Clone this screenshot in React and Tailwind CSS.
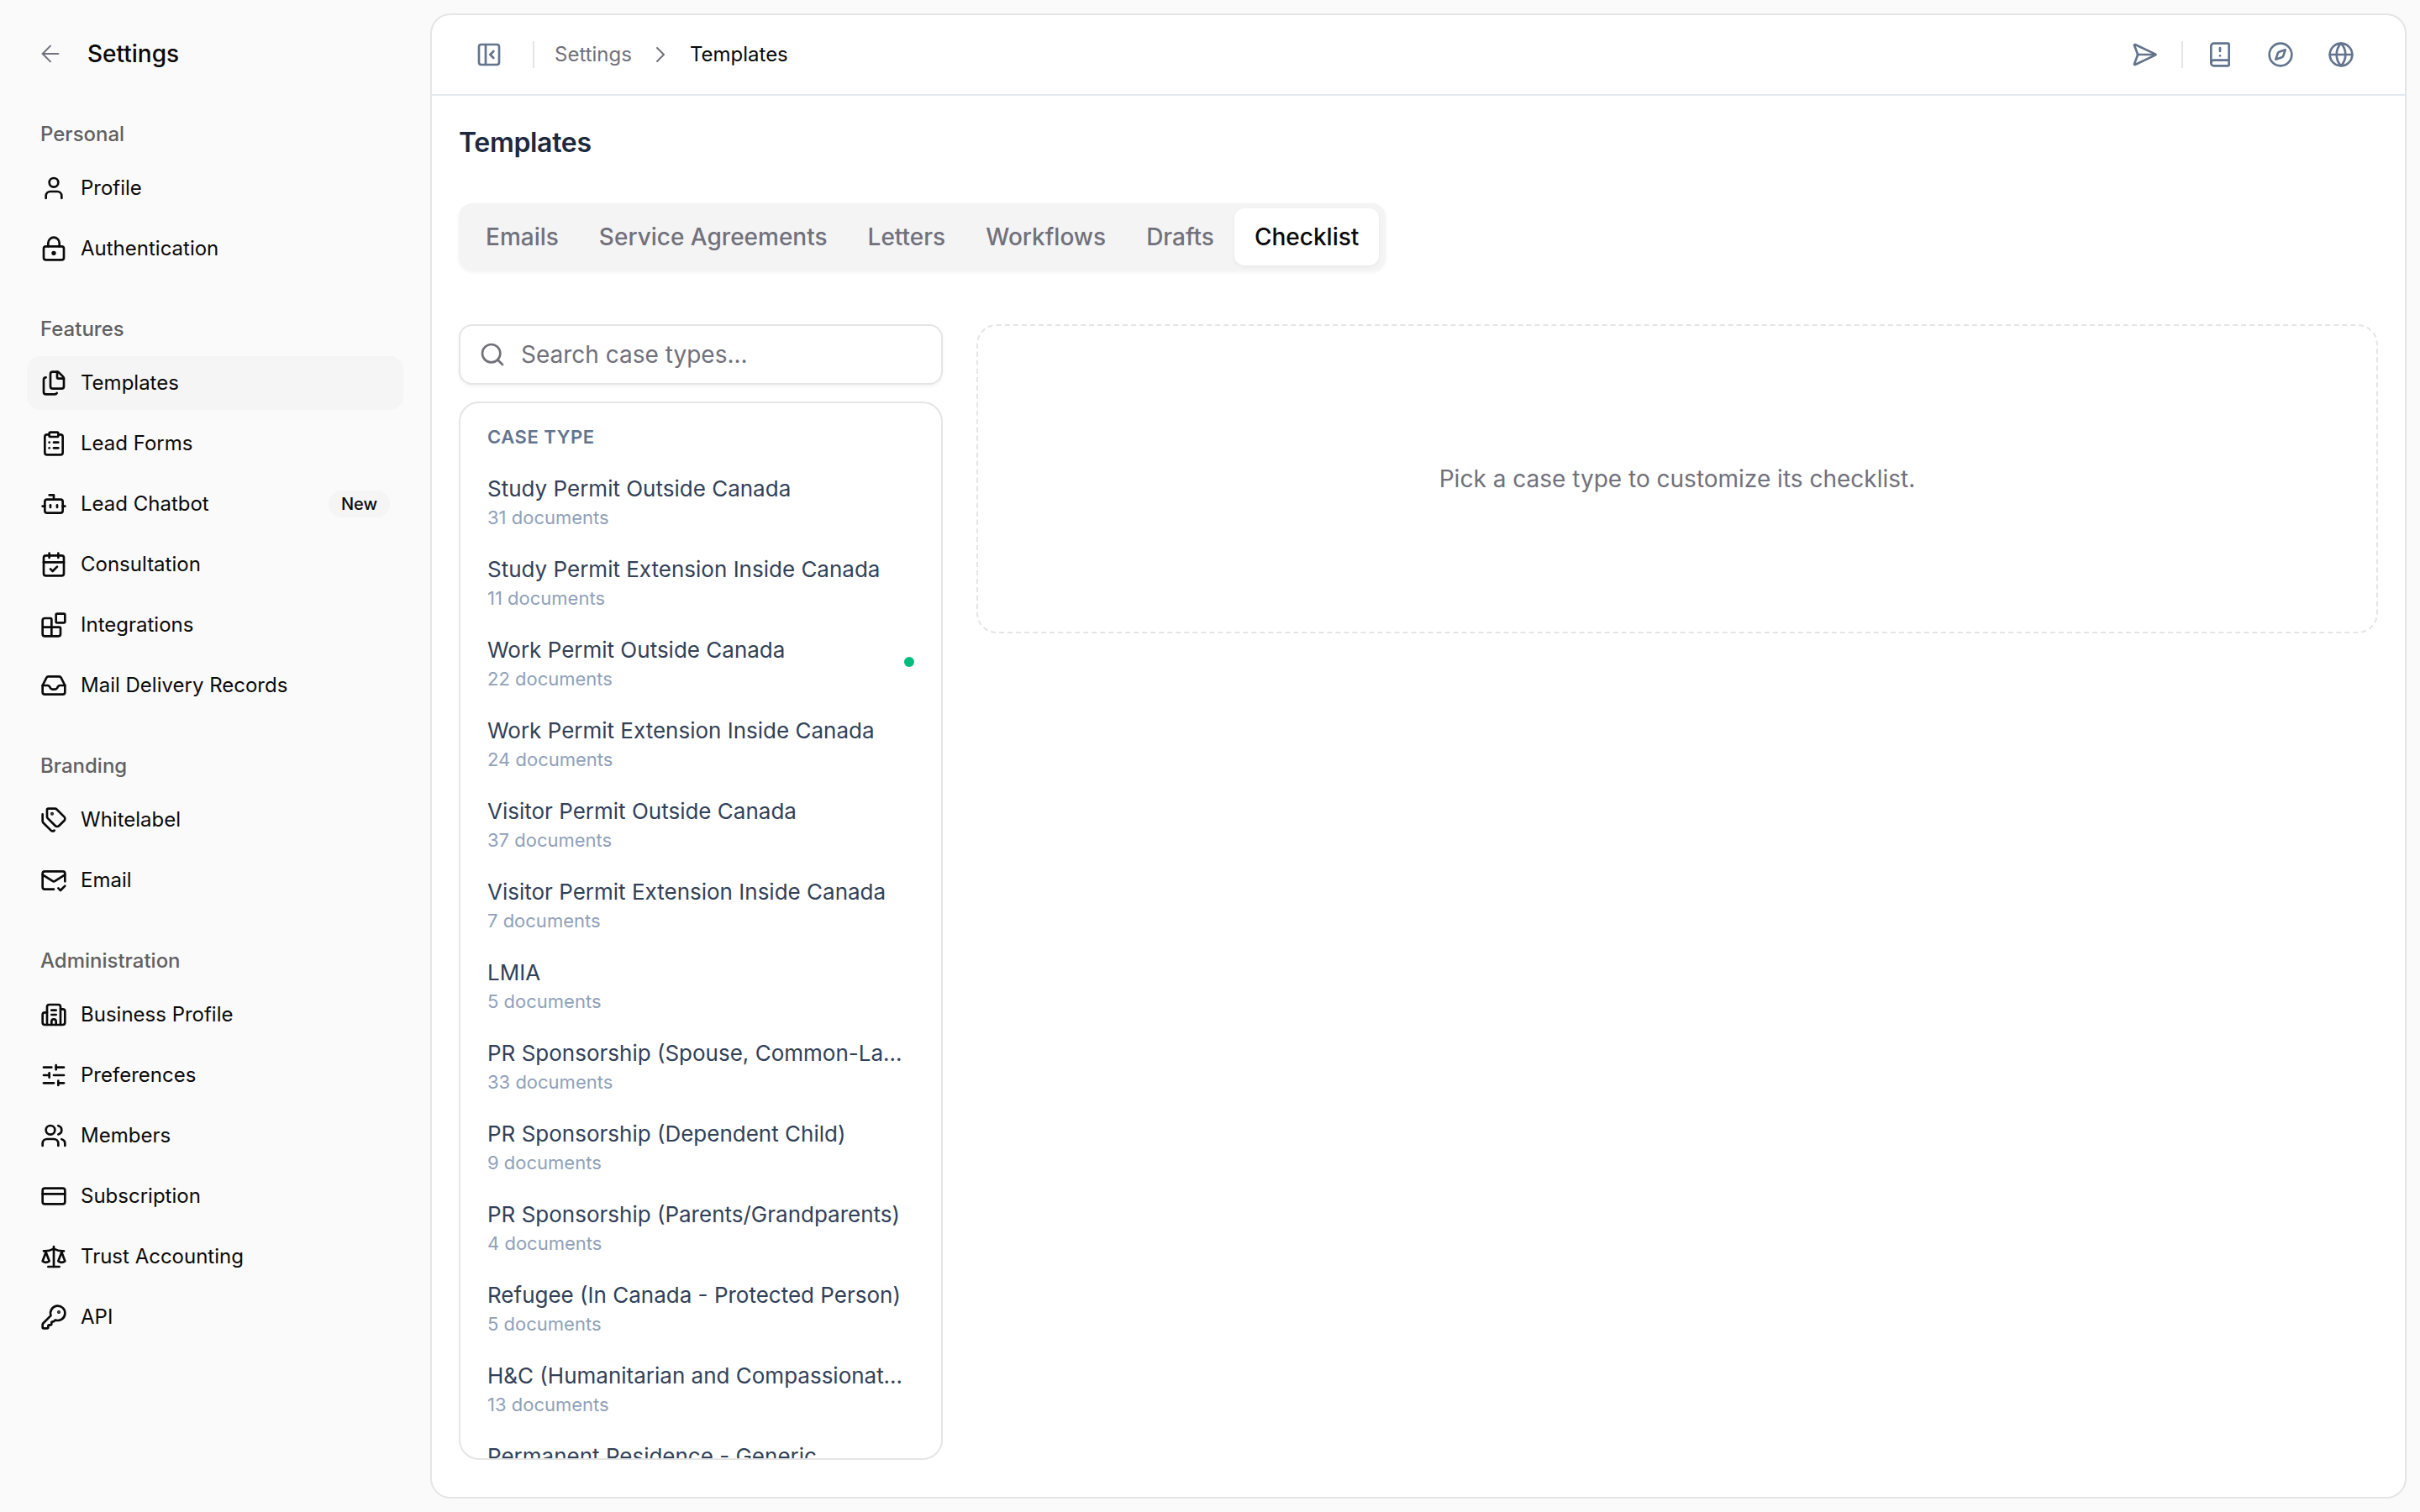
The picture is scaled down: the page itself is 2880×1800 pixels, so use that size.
import React from "react";
import {
  ArrowLeft, User, LockKeyhole, Files, ClipboardList, Bot, CalendarCheck, Blocks, Tags, MailCheck,
  Building2, SlidersHorizontal, Users, CreditCard, Scale, KeyRound, PanelLeftClose, ChevronRight,
  SendHorizontal, BookAlert, Compass, Globe, Search,
} from "lucide-react";

function TrayIcon({ className }) {
  return (
    <svg className={className} viewBox="0 0 24 24" fill="none" stroke="currentColor" strokeWidth="2" strokeLinecap="round" strokeLinejoin="round">
      <path d="M5.45 5.11 2 12v6a2 2 0 0 0 2 2h16a2 2 0 0 0 2-2v-6l-3.45-6.89A2 2 0 0 0 16.76 4H7.24a2 2 0 0 0-1.79 1.11z" />
      <path d="M2 12h4.5c.8 0 1.4.4 1.8 1.1l.7 1.3c.4.7 1 1.1 1.8 1.1h2.4c.8 0 1.4-.4 1.8-1.1l.7-1.3c.4-.7 1-1.1 1.8-1.1H22" />
    </svg>
  );
}

const sections = [
  { label: "Personal", items: [{ t: "Profile", I: User }, { t: "Authentication", I: LockKeyhole }] },
  {
    label: "Features",
    items: [
      { t: "Templates", I: Files, active: true },
      { t: "Lead Forms", I: ClipboardList },
      { t: "Lead Chatbot", I: Bot, badge: "New" },
      { t: "Consultation", I: CalendarCheck },
      { t: "Integrations", I: Blocks },
      { t: "Mail Delivery Records", I: TrayIcon },
    ],
  },
  { label: "Branding", items: [{ t: "Whitelabel", I: Tags }, { t: "Email", I: MailCheck }] },
  {
    label: "Administration",
    items: [
      { t: "Business Profile", I: Building2 },
      { t: "Preferences", I: SlidersHorizontal },
      { t: "Members", I: Users },
      { t: "Subscription", I: CreditCard },
      { t: "Trust Accounting", I: Scale },
      { t: "API", I: KeyRound },
    ],
  },
];

const cases = [
  ["Study Permit Outside Canada", 31],
  ["Study Permit Extension Inside Canada", 11],
  ["Work Permit Outside Canada", 22, true],
  ["Work Permit Extension Inside Canada", 24],
  ["Visitor Permit Outside Canada", 37],
  ["Visitor Permit Extension Inside Canada", 7],
  ["LMIA", 5],
  ["PR Sponsorship (Spouse, Common-Law, Conjugal)", 33],
  ["PR Sponsorship (Dependent Child)", 9],
  ["PR Sponsorship (Parents/Grandparents)", 4],
  ["Refugee (In Canada - Protected Person)", 5],
  ["H&C (Humanitarian and Compassionate Grounds)", 13],
  ["Permanent Residence - Generic", 12],
];

const tabs = ["Emails", "Service Agreements", "Letters", "Workflows", "Drafts", "Checklist"];

export default function App() {
  return (
    <div className="[zoom:2] w-[1440px] h-[900px] flex overflow-hidden bg-[#fafafa] [font-family:Inter,sans-serif]">
      <aside className="w-64 shrink-0 px-4 pt-4">
        <div className="h-8 flex items-center gap-2">
          <div className="size-7 flex items-center justify-center">
            <ArrowLeft className="size-4 text-zinc-500" strokeWidth={1.5} />
          </div>
          <span className="text-sm font-medium text-neutral-950">Settings</span>
        </div>
        {sections.map((s) => (
          <div key={s.label} className="mt-6">
            <div className="mb-2 px-2 text-xs leading-4 font-medium text-[#616161]">{s.label}</div>
            <div className="flex flex-col gap-1">
              {s.items.map(({ t, I, active, badge }) => (
                <div
                  key={t}
                  className={`h-8 flex items-center gap-2 px-2 rounded-lg text-xs text-neutral-950 ${active ? "bg-neutral-100" : ""}`}
                >
                  <I className="size-4 shrink-0" />
                  <span className="flex-1">{t}</span>
                  {badge && (
                    <span className="h-4 px-[7.5px] rounded-full bg-neutral-100 text-[10px] font-medium leading-4">{badge}</span>
                  )}
                </div>
              ))}
            </div>
          </div>
        ))}
      </aside>
      <main className="flex-1 min-w-0 py-2 pr-2">
        <div className="h-full flex flex-col border border-neutral-200 rounded-xl bg-white overflow-hidden">
          <header className="h-12 shrink-0 border-b border-slate-200 flex items-center pl-5 pr-6">
            <div className="size-7 flex items-center justify-center">
              <PanelLeftClose className="size-4 text-slate-500" />
            </div>
            <div className="w-px h-4 bg-neutral-200 ml-3" />
            <span className="ml-3 text-xs text-zinc-500">Settings</span>
            <ChevronRight className="ml-[9px] size-4 text-zinc-500" strokeWidth={1.5} />
            <span className="ml-[9.5px] text-xs text-neutral-950">Templates</span>
            <div className="ml-auto flex items-center gap-2 text-slate-500">
              <div className="size-7 flex items-center justify-center"><SendHorizontal className="size-4" /></div>
              <div className="w-px h-4 bg-neutral-200" />
              <div className="size-7 flex items-center justify-center"><BookAlert className="size-4" /></div>
              <div className="size-7 flex items-center justify-center"><Compass className="size-4" /></div>
              <div className="size-7 flex items-center justify-center"><Globe className="size-4" /></div>
            </div>
          </header>
          <div className="flex-1 min-h-0 flex flex-col px-4 pt-4 pb-[22px]">
            <h1 className="text-base font-semibold tracking-[-0.01em] text-slate-800">Templates</h1>
            <div className="mt-6 self-start h-10 py-[3px] pl-1 pr-1 flex rounded-lg bg-zinc-100 shadow-xs">
              {tabs.map((t) => (
                <div
                  key={t}
                  className={`px-3 flex items-center rounded-md text-sm font-medium ${t === "Checklist" ? "bg-white text-neutral-950 shadow-xs" : "text-zinc-500"}`}
                >
                  {t}
                </div>
              ))}
            </div>
            <div className="mt-8 flex-1 min-h-0 flex gap-5">
              <div className="w-72 shrink-0 flex flex-col gap-2.5">
                <div className="h-9 shrink-0 flex items-center gap-[9px] pl-[11px] border border-neutral-200 rounded-lg bg-white shadow-xs">
                  <Search className="size-4 text-zinc-500" />
                  <span className="text-sm text-zinc-500">Search case types...</span>
                </div>
                <div className="flex-1 min-h-0 border border-neutral-200 rounded-xl overflow-hidden px-4 pt-3">
                  <div className="text-[11px] leading-4 font-semibold tracking-wide text-slate-500 uppercase mb-1.5">Case Type</div>
                  {cases.map(([n, c, dot]) => (
                    <div key={n} className="py-1.5 flex items-center">
                      <div className="flex-1 min-w-0">
                        <div className="truncate pt-0.5 text-[13px] leading-[18px] text-slate-700">{n}</div>
                        <div className="text-[11px] leading-4 text-slate-400">{c} documents</div>
                      </div>
                      <div className="w-1.5 shrink-0 flex justify-end">
                        {dot && <div className="size-1.5 rounded-full bg-emerald-500" />}
                      </div>
                    </div>
                  ))}
                </div>
              </div>
              <div className="flex-1 h-[184px] flex items-center justify-center border border-dashed border-neutral-200 rounded-xl text-sm text-zinc-500">
                Pick a case type to customize its checklist.
              </div>
            </div>
          </div>
        </div>
      </main>
    </div>
  );
}
